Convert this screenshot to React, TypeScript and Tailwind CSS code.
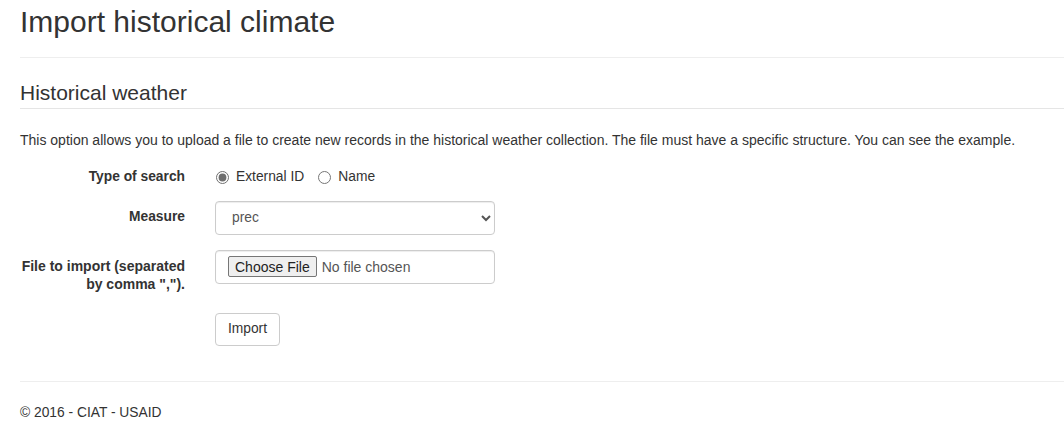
import React, { useState } from 'react';

export default function App() {
    const [searchType, setSearchType] = useState('external');
    const [measure, setMeasure] = useState('prec');

    return (
        <div className="min-h-[435px] bg-white pl-5 text-[13.8px] text-[#333] font-['Liberation_Sans',Arial,sans-serif]">
            <h1 className="pt-[5px] pb-[19px] text-[30px] leading-[33px] border-b border-[#eee]">Import historical climate</h1>

            <h2 className="mt-[22px] pb-[3px] text-[21px] leading-[25px] border-b border-[#e5e5e5]">Historical weather</h2>

            <p className="mt-[22px] text-[14px] leading-[18px]">
                This option allows you to upload a file to create new records in the historical weather collection. The file must have a specific structure. You can see the example.
            </p>

            <form className="mt-[18px] flex flex-col" onSubmit={e => e.preventDefault()}>
                <div className="flex items-center">
                    <label className="w-[165px] text-right font-bold">Type of search</label>
                    <div className="ml-[30px] flex items-center">
                        <label className="flex items-center gap-[7px]">
                            <input
                                type="radio"
                                name="type"
                                className="m-0 ml-[1px] h-[13px] w-[13px] accent-[#6f6f6f]"
                                checked={searchType === 'external'}
                                onChange={() => setSearchType('external')}
                            />
                            <span>External ID</span>
                        </label>
                        <label className="ml-[14px] flex items-center gap-[7px]">
                            <input
                                type="radio"
                                name="type"
                                className="m-0 h-[13px] w-[13px] accent-[#6f6f6f]"
                                checked={searchType === 'name'}
                                onChange={() => setSearchType('name')}
                            />
                            <span>Name</span>
                        </label>
                    </div>
                </div>

                <div className="mt-[13px] flex items-center">
                    <label className="w-[165px] text-right font-bold">Measure</label>
                    <select
                        className="ml-[30px] h-[34px] w-[280px] rounded border border-[#ccc] bg-white pl-[12px] text-[#555] shadow-[inset_0_1px_1px_rgba(0,0,0,0.075)]"
                        value={measure}
                        onChange={e => setMeasure(e.target.value)}
                    >
                        <option value="prec">prec</option>
                        <option value="t_max">t_max</option>
                        <option value="t_min">t_min</option>
                        <option value="sol_rad">sol_rad</option>
                    </select>
                </div>

                <div className="mt-[15px] flex items-start">
                    <label className="w-[165px] pt-[7px] text-right text-[14px] font-bold leading-[18px]">File to import (separated by comma ",").</label>
                    <div className="ml-[30px] flex h-[34px] w-[280px] items-center rounded border border-[#ccc] px-[12px] shadow-[inset_0_1px_1px_rgba(0,0,0,0.075)]">
                        <input
                            type="file"
                            className="text-[14px] text-[#555] file:mr-[5px] file:h-[21px] file:rounded-[2px] file:border file:border-[#767676] file:bg-[#efefef] file:px-[6px] file:text-[#222]"
                        />
                    </div>
                </div>

                <div className="mt-[20px] flex">
                    <button
                        type="submit"
                        className="ml-[195px] h-[33px] w-[65px] rounded border border-[#ccc] bg-white text-[#333]"
                    >
                        Import
                    </button>
                </div>
            </form>

            <footer className="mt-[35px] border-t border-[#eee] pt-[21px] pb-[14px]">
                <p>© 2016 - CIAT - USAID</p>
            </footer>
        </div>
    );
}
